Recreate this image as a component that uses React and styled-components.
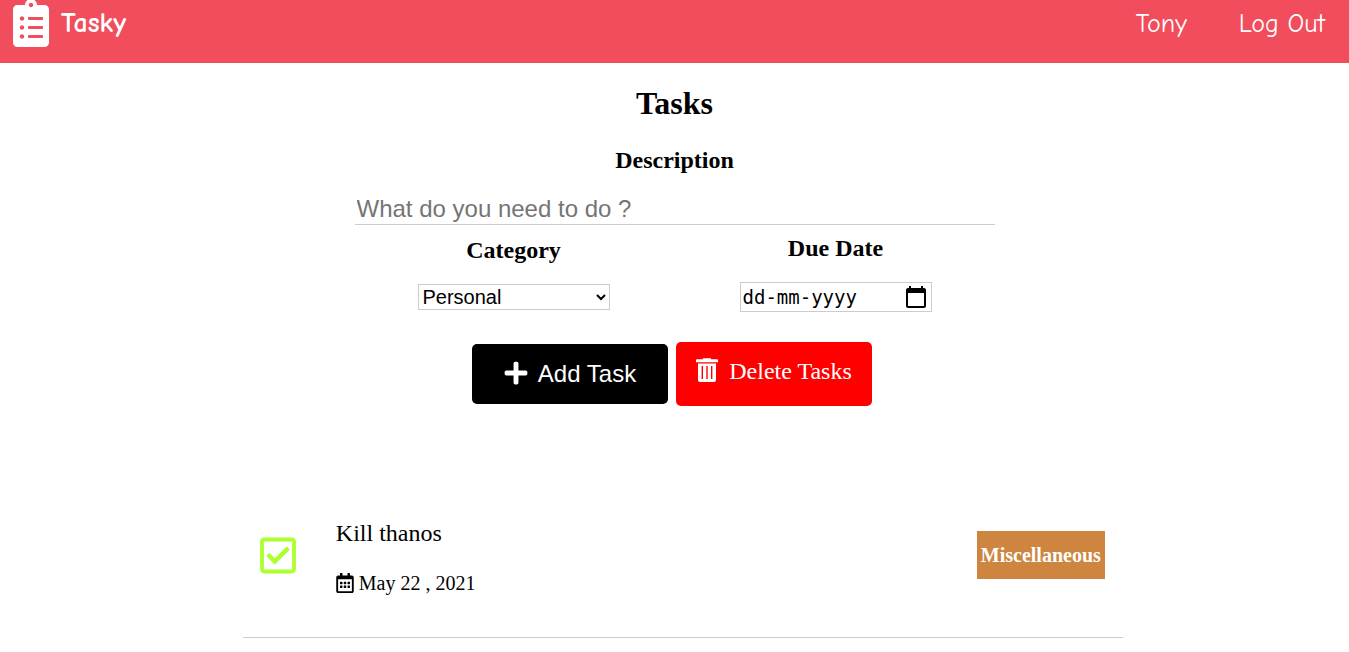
import React, { useState } from "react";
import styled, { createGlobalStyle } from "styled-components";
import { FaClipboardList, FaPlus, FaRegCheckSquare, FaRegCalendarAlt } from "react-icons/fa";

const GlobalStyle = createGlobalStyle`
  * { box-sizing: border-box; }
  body {
    margin: 0;
    background: #fff;
    color: #000;
    font-family: "Liberation Serif", serif;
  }
`;

const NavBar = styled.nav`
  background: #f14d5d;
  padding: 0 24px 17px 13px;
`;

const NavRow = styled.div`
  display: flex;
  align-items: center;
  justify-content: space-between;
  height: 46px;
  font-family: "Comic Sans MS", "Comic Neue", Lato, sans-serif;
  font-size: 26px;
  font-weight: 500;
`;

const NavLink = styled.a`
  color: #fff;
  text-decoration: none;
`;

const Brand = styled(NavLink)`
  display: flex;
  align-items: center;
  gap: 12px;
  font-size: 28px;
  font-weight: 700;

  svg {
    width: 36px;
    height: 48px;
  }
`;

const NavLinks = styled.div`
  display: flex;
  gap: 52px;
  padding-top: 2px;
`;

const TaskForm = styled.form`
  display: flex;
  flex-direction: column;
  width: 640px;
  max-width: 100%;
  margin: 0 auto;
  text-align: center;
`;

const Title = styled.h1`
  margin: 22px 0 25px;
  font-size: 32px;
  line-height: 36px;
`;

const FieldLabel = styled.label`
  font-size: 24px;
  font-weight: 700;
  line-height: 28px;
`;

const DescriptionInput = styled.input`
  width: 100%;
  height: 32px;
  margin-top: 19px;
  padding: 1px 2px;
  border: 0;
  border-bottom: 1px solid #ccc;
  font-family: "Liberation Sans", sans-serif;
  font-size: 24px;

  &::placeholder {
    color: #757575;
  }
`;

const FieldColumns = styled.div`
  display: grid;
  grid-template-columns: 1fr 1fr;
  align-items: center;
  gap: 4px;
  margin-top: 9px;
`;

const Field = styled.div`
  display: flex;
  flex-direction: column;
  align-items: center;
  gap: 20px;
`;

const CategorySelect = styled.select`
  width: 192px;
  height: 26px;
  border: 1px solid #ccc;
  border-radius: 0;
  background: #fff;
  color: #000;
  font-family: "Liberation Sans", sans-serif;
  font-size: 20px;
`;

const DateBox = styled.div`
  display: flex;
  align-items: center;
  width: 192px;
  height: 30px;
  padding: 0 3px 0 2px;
  border: 1px solid #ccc;
`;

const DateInput = styled.input`
  flex: 1;
  min-width: 0;
  padding: 0;
  border: 0;
  font-family: "DejaVu Sans Mono", monospace;
  font-size: 19px;

  &::placeholder {
    color: #000;
  }
`;

const PickerButton = styled.button`
  display: flex;
  padding: 0;
  border: 0;
  background: none;
`;

const Actions = styled.div`
  display: flex;
  align-items: center;
  justify-content: center;
  gap: 8px;
  margin-top: 30px;
  padding-right: 5px;
`;

const ActionButton = styled.button`
  display: flex;
  justify-content: center;
  width: 196px;
  border: 0;
  border-radius: 5px;
  color: #fff;
  font-size: 24px;
  line-height: 28px;
  cursor: pointer;
`;

const AddButton = styled(ActionButton)`
  gap: 10px;
  padding: 16px 0;
  background: #000;
  font-family: "Liberation Sans", sans-serif;

  svg {
    height: 26px;
  }
`;

const DeleteButton = styled(ActionButton)`
  gap: 11px;
  padding: 15px 0 21px;
  background: #f00;
  font-family: "Liberation Serif", serif;
`;

const TaskList = styled.ul`
  width: 880px;
  max-width: 82%;
  margin: 91px 0 0 18%;
  padding: 0;
  list-style: none;
`;

const TaskItem = styled.li`
  display: flex;
  align-items: center;
  padding: 18px 18px 42px 17px;
  border-bottom: 1px solid #ccc;
`;

const DoneButton = styled.button`
  display: flex;
  margin-right: 40px;
  padding: 0;
  border: 0;
  background: none;
  color: #adff2f;

  svg {
    width: 36px;
    height: 41px;
  }
`;

const TaskBody = styled.div`
  display: flex;
  flex: 1;
  flex-direction: column;
  gap: 24px;
  padding-top: 4px;
`;

const TaskName = styled.span`
  font-size: 24px;
  line-height: 28px;
`;

const TaskDate = styled.span`
  display: flex;
  align-items: center;
  gap: 5px;
  font-size: 20px;
  line-height: 24px;

  svg {
    width: 18px;
  }
`;

const CategoryTag = styled.span`
  padding: 12px 4px;
  background: #cd853f;
  color: #fff;
  font-size: 20px;
  font-weight: 700;
  line-height: 24px;
`;

const tasks = [{ id: 1, name: "Kill thanos", date: "May 22 , 2021", category: "Miscellaneous" }];

function CalendarIcon() {
  return (
    <svg width="24" height="24" viewBox="0 0 24 24" aria-hidden="true">
      <path
        fill="#000"
        d="M20 3h-1V1h-2v2H7V1H5v2H4c-1.1 0-2 .9-2 2v16c0 1.1.9 2 2 2h16c1.1 0 2-.9 2-2V5c0-1.1-.9-2-2-2zm0 18H4V8h16v13z"
      />
    </svg>
  );
}

function TrashIcon() {
  return (
    <svg width="22" height="26" viewBox="0 0 22 26" aria-hidden="true">
      <path fill="#fff" d="M7 1.2h8v1h6q1 0 1 1v2H0v-2q0-1 1-1h6z" />
      <path
        fill="#fff"
        fillRule="evenodd"
        d="M2 6.5h18V23q0 2-2 2H4q-2 0-2-2zM5.6 9v13h1.4V9zM10.3 9v13h1.4V9zM15 9v13h1.4V9z"
      />
    </svg>
  );
}

export default function App() {
  const [description, setDescription] = useState("");
  const [dueDate, setDueDate] = useState("");

  return (
    <>
      <GlobalStyle />
      <NavBar>
        <NavRow>
          <Brand href="#">
            <FaClipboardList />
            Tasky
          </Brand>
          <NavLinks>
            <NavLink href="#profile">Tony</NavLink>
            <NavLink href="#logout">Log Out</NavLink>
          </NavLinks>
        </NavRow>
      </NavBar>
      <main>
        <TaskForm onSubmit={(event) => event.preventDefault()}>
          <Title>Tasks</Title>
          <FieldLabel htmlFor="description">Description</FieldLabel>
          <DescriptionInput
            id="description"
            placeholder="What do you need to do ?"
            value={description}
            onChange={(event) => setDescription(event.target.value)}
          />
          <FieldColumns>
            <Field>
              <FieldLabel htmlFor="category">Category</FieldLabel>
              <CategorySelect id="category" defaultValue="Personal">
                <option>Personal</option>
                <option>Work</option>
                <option>Miscellaneous</option>
              </CategorySelect>
            </Field>
            <Field>
              <FieldLabel htmlFor="due-date">Due Date</FieldLabel>
              <DateBox>
                <DateInput
                  id="due-date"
                  placeholder="dd-mm-yyyy"
                  value={dueDate}
                  onChange={(event) => setDueDate(event.target.value)}
                />
                <PickerButton type="button" aria-label="Choose date">
                  <CalendarIcon />
                </PickerButton>
              </DateBox>
            </Field>
          </FieldColumns>
          <Actions>
            <AddButton type="submit">
              <FaPlus />
              Add Task
            </AddButton>
            <DeleteButton type="button">
              <TrashIcon />
              Delete Tasks
            </DeleteButton>
          </Actions>
        </TaskForm>
        <TaskList>
          {tasks.map((task) => (
            <TaskItem key={task.id}>
              <DoneButton type="button" aria-label="Mark as done">
                <FaRegCheckSquare />
              </DoneButton>
              <TaskBody>
                <TaskName>{task.name}</TaskName>
                <TaskDate>
                  <FaRegCalendarAlt />
                  {task.date}
                </TaskDate>
              </TaskBody>
              <CategoryTag>{task.category}</CategoryTag>
            </TaskItem>
          ))}
        </TaskList>
      </main>
    </>
  );
}
